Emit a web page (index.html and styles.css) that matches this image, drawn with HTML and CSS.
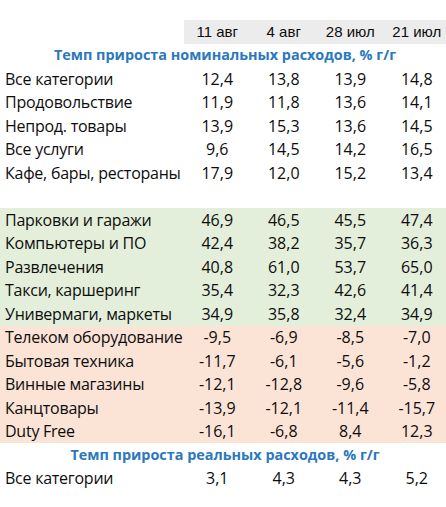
FILE: index.html
```html
<!DOCTYPE html>
<html lang="ru">
<head>
<meta charset="UTF-8" />
<meta name="viewport" content="width=device-width, initial-scale=1" />
<title>Темп прироста расходов</title>
<link rel="stylesheet" href="styles.css">
</head>
<body>

<table class="spend-table">
  <colgroup>
    <col class="col-label" />
    <col class="col-value" />
    <col class="col-value" />
    <col class="col-value" />
    <col class="col-value" />
  </colgroup>

  <thead>
    <tr class="dates">
      <th class="blank"></th>
      <th>11 авг</th>
      <th>4 авг</th>
      <th>28 июл</th>
      <th>21 июл</th>
    </tr>
  </thead>

  <tbody>
    <!-- Nominal -->
    <tr class="section"><td colspan="5">Темп прироста номинальных расходов, % г/г</td></tr>
    <tr><td class="label">Все категории</td><td>12,4</td><td>13,8</td><td>13,9</td><td>14,8</td></tr>
    <tr><td class="label">Продовольствие</td><td>11,9</td><td>11,8</td><td>13,6</td><td>14,1</td></tr>
    <tr><td class="label">Непрод. товары</td><td>13,9</td><td>15,3</td><td>13,6</td><td>14,5</td></tr>
    <tr><td class="label">Все услуги</td><td>9,6</td><td>14,5</td><td>14,2</td><td>16,5</td></tr>
    <tr><td class="label">Кафе, бары, рестораны</td><td>17,9</td><td>12,0</td><td>15,2</td><td>13,4</td></tr>
    <tr class="gap"><td colspan="5"></td></tr>

    <!-- Leaders -->
    <tr class="up"><td class="label">Парковки и гаражи</td><td>46,9</td><td>46,5</td><td>45,5</td><td>47,4</td></tr>
    <tr class="up"><td class="label">Компьютеры и ПО</td><td>42,4</td><td>38,2</td><td>35,7</td><td>36,3</td></tr>
    <tr class="up"><td class="label">Развлечения</td><td>40,8</td><td>61,0</td><td>53,7</td><td>65,0</td></tr>
    <tr class="up"><td class="label">Такси, каршеринг</td><td>35,4</td><td>32,3</td><td>42,6</td><td>41,4</td></tr>
    <tr class="up"><td class="label">Универмаги, маркеты</td><td>34,9</td><td>35,8</td><td>32,4</td><td>34,9</td></tr>

    <!-- Outsiders -->
    <tr class="down"><td class="label">Телеком оборудование</td><td>-9,5</td><td>-6,9</td><td>-8,5</td><td>-7,0</td></tr>
    <tr class="down"><td class="label">Бытовая техника</td><td>-11,7</td><td>-6,1</td><td>-5,6</td><td>-1,2</td></tr>
    <tr class="down"><td class="label">Винные магазины</td><td>-12,1</td><td>-12,8</td><td>-9,6</td><td>-5,8</td></tr>
    <tr class="down"><td class="label">Канцтовары</td><td>-13,9</td><td>-12,1</td><td>-11,4</td><td>-15,7</td></tr>
    <tr class="down"><td class="label">Duty Free</td><td>-16,1</td><td>-6,8</td><td>8,4</td><td>12,3</td></tr>

    <!-- Real -->
    <tr class="section"><td colspan="5">Темп прироста реальных расходов, % г/г</td></tr>
    <tr><td class="label">Все категории</td><td>3,1</td><td>4,3</td><td>4,3</td><td>5,2</td></tr>
  </tbody>
</table>

</body>
</html>
```

FILE: styles.css
```css
/* Base */
html, body {
  overflow: hidden;
}
body {
  margin: 0;
  padding-top: 20px;
  background: #fff;
  color: #0d0d0d;
  font-family: 'Open Sans', 'Noto Sans', sans-serif;
  font-size: 16px;
}

/* Table */
.spend-table {
  border-collapse: collapse;
  table-layout: fixed;
  width: 450px;
}
.col-label {
  width: 184px;
}
.col-value {
  width: 66.5px;
}

.spend-table tr {
  height: 23.5px;
}
.spend-table th,
.spend-table td {
  padding: 0;
  text-align: center;
  vertical-align: middle;
  white-space: nowrap;
  overflow: hidden;
  line-height: 20px;
}

/* Date header */
.dates th {
  background: #ececec;
  font-family: 'Liberation Sans', Arial, sans-serif;
  font-weight: 400;
  font-size: 15px;
}
.dates th.blank {
  background: #fff;
}

/* Section titles */
.section td {
  color: #2b78be;
  font-weight: 700;
  font-size: 14.4px;
}

/* Row labels */
.spend-table td.label {
  text-align: left;
  padding-left: 5px;
  letter-spacing: -0.25px;
  text-overflow: clip;
}

/* Highlighted groups */
.up td {
  background: #e3efda;
}
.down td {
  background: #fbe3d6;
}
```
